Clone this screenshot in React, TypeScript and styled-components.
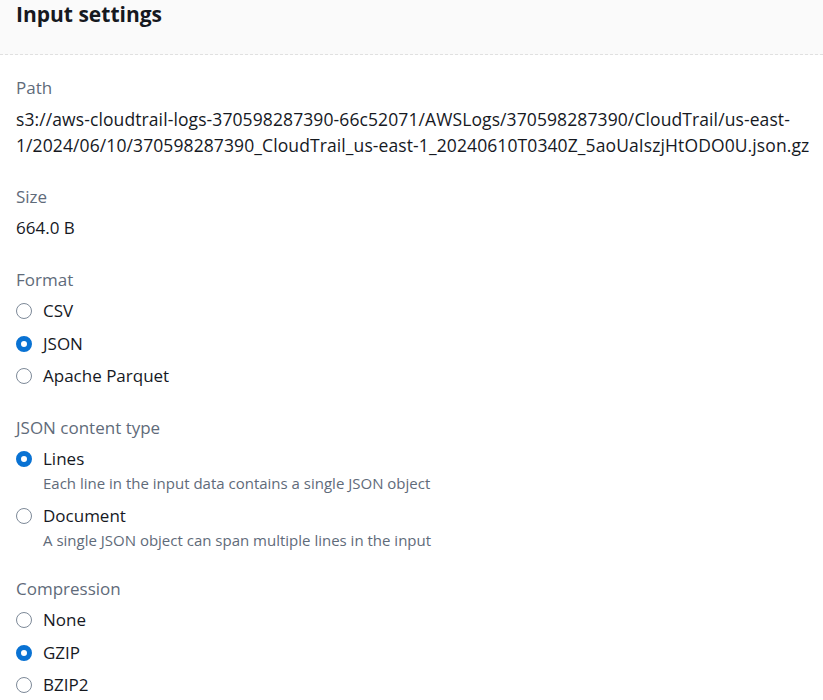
import React from "react";
import styled, { createGlobalStyle } from "styled-components";

const Global = createGlobalStyle`
  html, body { margin: 0; padding: 0; background: #ffffff; }
  body { font-family: "Open Sans", "Noto Sans", sans-serif; color: #16191f; }
`;

const Page = styled.div`
  width: 823px;
  height: 700px;
  overflow: hidden;
  background: #ffffff;
`;

const Header = styled.div`
  background: #fafafa;
  padding: 0 16px 26px;
  border-bottom: 1px dashed #e0e0e0;
`;

const Title = styled.h2`
  margin: 0;
  font-size: 21px;
  line-height: 28px;
  font-weight: 700;
  color: #16191f;
`;

const Body = styled.div`
  display: flex;
  flex-direction: column;
  gap: 27px;
  padding: 21px 6px 0 16px;
`;

const Section = styled.div`
  display: flex;
  flex-direction: column;
`;

const Label = styled.div`
  font-size: 17px;
  line-height: 24px;
  color: #5f6b7a;
  margin-bottom: 6px;
`;

const Value = styled.div<{ $mono?: boolean }>`
  font-size: ${(p) => (p.$mono ? "17.5px" : "17px")};
  letter-spacing: ${(p) => (p.$mono ? "0.1px" : "0")};
  line-height: 26px;
  color: #16191f;
`;

const Group = styled.div`
  display: flex;
  flex-direction: column;
  gap: 6.5px;
`;

const Option = styled.div<{ $spaced?: boolean }>`
  display: grid;
  grid-template-columns: 16px 1fr;
  column-gap: 11px;
  align-items: center;
  padding-bottom: ${(p) => (p.$spaced ? "3.5px" : "0")};
`;

const Circle = styled.span<{ $checked?: boolean }>`
  box-sizing: border-box;
  width: 16px;
  height: 16px;
  border-radius: 50%;
  background: #ffffff;
  border: ${(p) => (p.$checked ? "5px solid #0972d3" : "1.5px solid #7d8998")};
`;

const OptionText = styled.span`
  font-size: 17px;
  line-height: 26px;
  color: #16191f;
`;

const Desc = styled.span`
  grid-column: 2;
  font-size: 15px;
  line-height: 20px;
  color: #5f6b7a;
  margin-top: 1px;
`;

type Opt = { label: string; desc?: string; checked?: boolean };

const Radios = ({ options }: { options: Opt[] }) => (
  <Group>
    {options.map((o, i) => (
      <Option key={o.label} $spaced={!!o.desc && i < options.length - 1}>
        <Circle $checked={o.checked} />
        <OptionText>{o.label}</OptionText>
        {o.desc && <Desc>{o.desc}</Desc>}
      </Option>
    ))}
  </Group>
);

export default function App() {
  return (
    <Page>
      <Global />
      <Header>
        <Title>Input settings</Title>
      </Header>
      <Body>
        <Section>
          <Label>Path</Label>
          <Value $mono>
            s3://aws-cloudtrail-logs-370598287390-66c52071/AWSLogs/370598287390/CloudTrail/us-east-1/2024/06/10/370598287390_CloudTrail_us-east-1_20240610T0340Z_5aoUaIszjHtODO0U.json.gz
          </Value>
        </Section>
        <Section>
          <Label>Size</Label>
          <Value>664.0 B</Value>
        </Section>
        <Section>
          <Label>Format</Label>
          <Radios
            options={[
              { label: "CSV" },
              { label: "JSON", checked: true },
              { label: "Apache Parquet" },
            ]}
          />
        </Section>
        <Section>
          <Label>JSON content type</Label>
          <Radios
            options={[
              {
                label: "Lines",
                checked: true,
                desc: "Each line in the input data contains a single JSON object",
              },
              {
                label: "Document",
                desc: "A single JSON object can span multiple lines in the input",
              },
            ]}
          />
        </Section>
        <Section>
          <Label>Compression</Label>
          <Radios
            options={[
              { label: "None" },
              { label: "GZIP", checked: true },
              { label: "BZIP2" },
            ]}
          />
        </Section>
      </Body>
    </Page>
  );
}
